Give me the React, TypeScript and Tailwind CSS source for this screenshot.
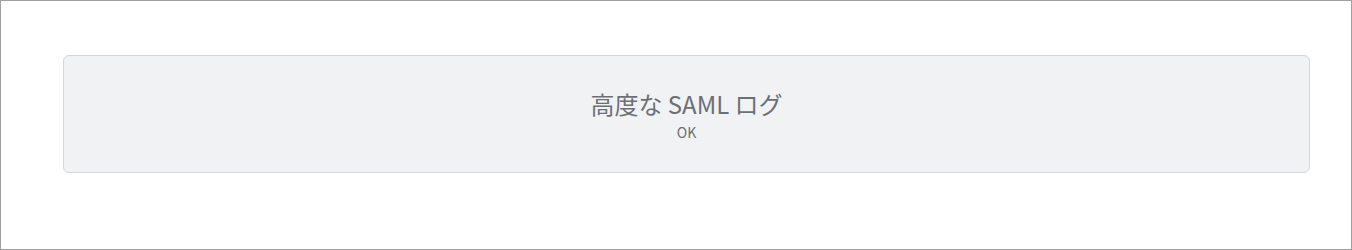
export default function App() {
  return (
    <div
      className="w-[1352px] h-[250px] border border-[#a0a0a0] bg-white pt-[54px] pl-[62px]"
      style={{ fontFamily: '"Noto Sans CJK JP", "Noto Sans", sans-serif' }}
    >
      <div className="w-[1247px] h-[118px] rounded-[6px] border border-[#d3d6db] bg-[#f1f2f4] flex flex-col items-center justify-center pt-[2px]">
        <div className="text-[24px] leading-[32px] text-[#6c6f75]">高度な SAML ログ</div>
        <div className="text-[14px] leading-[20px] text-[#6c6f75] mt-[2px]">OK</div>
      </div>
    </div>
  );
}
